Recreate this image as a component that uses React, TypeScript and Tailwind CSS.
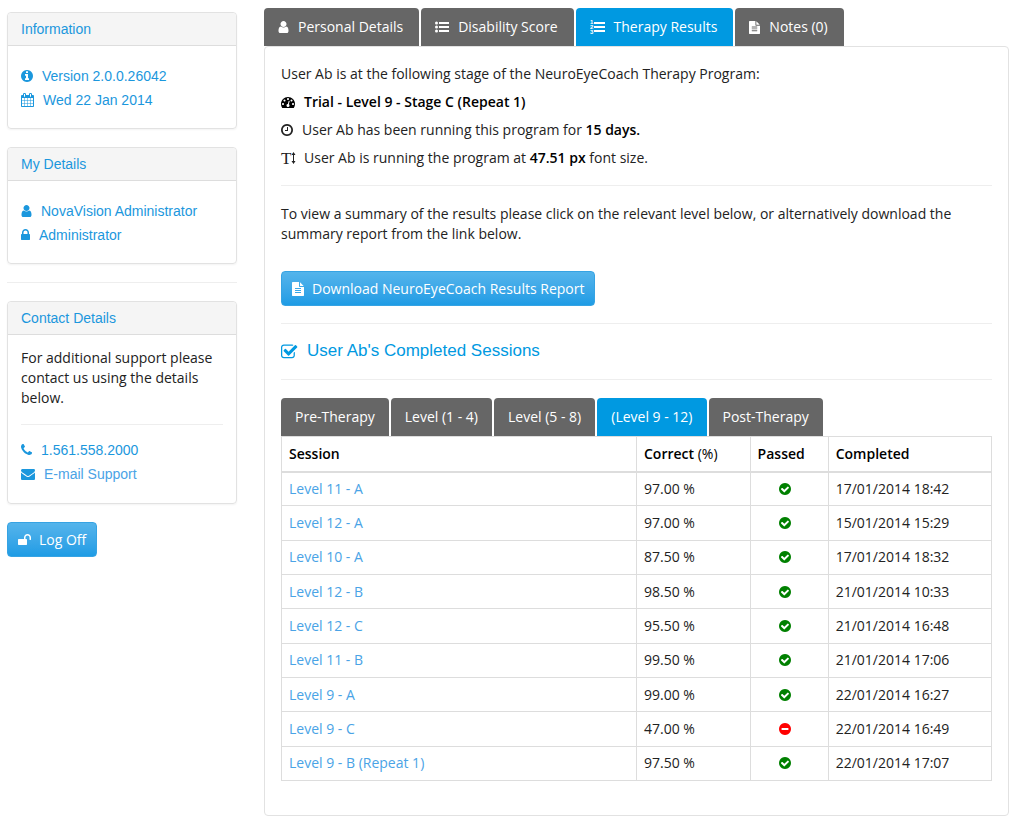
import { clsx } from "clsx";
import type { ReactNode } from "react";

const CIRCLE =
  "q0 209-103 385.5t-279.5 279.5-385.5 103-385.5-103-279.5-279.5-103-385.5 103-385.5 279.5-279.5 385.5-103 385.5 103 279.5 279.5 103 385.5z";
const DOT =
  "q0-53-37.5-90.5t-90.5-37.5-90.5 37.5-37.5 90.5 37.5 90.5 90.5 37.5 90.5-37.5 37.5-90.5z";
const LINE =
  "v-64q0-14-9-23t-23-9h-704q-14 0-23 9t-9 23v64q0 14 9 23t23 9h704q14 0 23-9t9-23z";

// every glyph sits on a 1792 unit high grid, x and w crop it to its own width
const icons = {
  user: {
    x: 192,
    w: 1408,
    d: "M1536 1399q0 109-62.5 187t-150.5 78h-854q-88 0-150.5-78t-62.5-187q0-85 8.5-160.5t31.5-152 58.5-131 94-89 134.5-34.5q131 128 313 128t313-128q76 0 134.5 34.5t94 89 58.5 131 31.5 152 8.5 160.5zm-256-887q0 159-112.5 271.5t-271.5 112.5-271.5-112.5-112.5-271.5 112.5-271.5 271.5-112.5 271.5 112.5 112.5 271.5z",
  },
  info: {
    x: 128,
    w: 1536,
    d: `M1152 1376v-160q0-14-9-23t-23-9h-96v-512q0-14-9-23t-23-9h-320q-14 0-23 9t-9 23v160q0 14 9 23t23 9h96v320h-96q-14 0-23 9t-9 23v160q0 14 9 23t23 9h448q14 0 23-9t9-23zm-128-896v-160q0-14-9-23t-23-9h-192q-14 0-23 9t-9 23v160q0 14 9 23t23 9h192q14 0 23-9t9-23zm640 416${CIRCLE}`,
  },
  calendar: {
    x: 64,
    w: 1664,
    d: "M192 1664h288v-288h-288v288zm352 0h320v-288h-320v288zm-352-352h288v-320h-288v320zm352 0h320v-320h-320v320zm-352-384h288v-288h-288v288zm736 736h320v-288h-320v288zm-384-736h320v-288h-320v288zm768 736h288v-288h-288v288zm-384-352h320v-320h-320v320zm-352-864v-288q0-13-9.5-22.5t-22.5-9.5h-64q-13 0-22.5 9.5t-9.5 22.5v288q0 13 9.5 22.5t22.5 9.5h64q13 0 22.5-9.5t9.5-22.5zm736 864h288v-320h-288v320zm-384-384h320v-288h-320v288zm384 0h288v-288h-288v288zm32-480v-288q0-13-9.5-22.5t-22.5-9.5h-64q-13 0-22.5 9.5t-9.5 22.5v288q0 13 9.5 22.5t22.5 9.5h64q13 0 22.5-9.5t9.5-22.5zm384-64v1280q0 52-38 90t-90 38h-1408q-52 0-90-38t-38-90v-1280q0-52 38-90t90-38h128v-96q0-66 47-113t113-47h64q66 0 113 47t47 113v96h384v-96q0-66 47-113t113-47h64q66 0 113 47t47 113v96h128q52 0 90 38t38 90z",
  },
  lock: {
    x: 320,
    w: 1152,
    d: "M640 768h512v-192q0-106-75-181t-181-75-181 75-75 181v192zm832 96v576q0 40-28 68t-68 28h-960q-40 0-68-28t-28-68v-576q0-40 28-68t68-28h32v-192q0-184 132-316t316-132 316 132 132 316v192h32q40 0 68 28t28 68z",
  },
  unlock: {
    x: 64,
    w: 1664,
    d: "M1728 576v256q0 26-19 45t-45 19h-64q-26 0-45-19t-19-45v-256q0-106-75-181t-181-75-181 75-75 181v192h96q40 0 68 28t28 68v576q0 40-28 68t-68 28h-960q-40 0-68-28t-28-68v-576q0-40 28-68t68-28h672v-192q0-185 131.5-316.5t316.5-131.5 316.5 131.5 131.5 316.5z",
  },
  phone: {
    x: 192,
    w: 1408,
    d: "M1600 1240q0 27-10 70.5t-21 68.5q-21 50-122 106-94 51-186 51-27 0-53-3.5t-57.5-12.5-47-14.5-55.5-20.5-49-18q-98-35-175-83-127-79-264-216t-216-264q-48-77-83-175-3-9-18-49t-20.5-55.5-14.5-47-12.5-57.5-3.5-53q0-92 51-186 56-101 106-122 25-11 68.5-21t70.5-10q14 0 21 3 18 6 53 76 11 19 30 54t35 63.5 31 53.5q3 4 17.5 25t21.5 35.5 7 28.5q0 20-28.5 50t-62 55-62 53-28.5 46q0 9 5 22.5t8.5 20.5 14 24 11.5 19q76 137 174 235t235 174q2 1 19 11.5t24 14 20.5 8.5 22.5 5q18 0 46-28.5t53-62 55-62 50-28.5q14 0 28.5 7t35.5 21.5 25 17.5q25 15 53.5 31t63.5 35 54 30q70 35 76 53 3 7 3 21z",
  },
  envelope: {
    x: 0,
    w: 1792,
    d: "M1792 710v794q0 66-47 113t-113 47h-1472q-66 0-113-47t-47-113v-794q44 49 101 87 362 246 497 345 57 42 92.5 65.5t94.5 48 110 24.5h2q51 0 110-24.5t94.5-48 92.5-65.5q170-123 498-345 57-39 100-87zm0-294q0 79-49 151t-122 123q-376 261-468 325-10 7-42.5 31t-54 38.5-52 32.5-57.5 27-50 9h-2q-23 0-50-9t-57.5-27-52-32.5-54-38.5-42.5-31q-91-64-262-182.5t-205-142.5q-62-42-117-115.5t-55-136.5q0-78 41.5-130t118.5-52h1472q65 0 112.5 47t47.5 113z",
  },
  list: {
    x: 0,
    w: 1792,
    d: "M384 1408a192 192 0 1 1-384 0 192 192 0 0 1 384 0zM384 896a192 192 0 1 1-384 0 192 192 0 0 1 384 0zM384 384a192 192 0 1 1-384 0 192 192 0 0 1 384 0zM512 1280h1280v256h-1280zM512 768h1280v256h-1280zM512 256h1280v256h-1280z",
  },
  file: {
    x: 128,
    w: 1536,
    d: `M1596 476q14 14 28 36h-472v-472q22 14 36 28zm-476 164h544v1056q0 40-28 68t-68 28h-1344q-40 0-68-28t-28-68v-1600q0-40 28-68t68-28h800v544q0 40 28 68t68 28zM1280 1376${LINE}M1280 1120${LINE}M1280 864${LINE}`,
  },
  dashboard: {
    x: 0,
    w: 1792,
    d: `M384 1152${DOT}M576 704${DOT}M1004 1185l101-382q6-26-7.5-48.5t-38.5-29.5-48 6.5-30 39.5l-101 382q-60 5-107 43.5t-63 98.5q-20 77 20 146t117 89 146-20 89-117q16-60-6-117t-72-91zM1664 1152${DOT}M1024 512${DOT}M1472 704${DOT}M1792 1152q0 261-141 483-19 29-54 29h-1402q-35 0-54-29-141-221-141-483 0-182 71-348t191-286 286-191 348-71 348 71 286 191 191 286 71 348z`,
  },
  clock: {
    x: 128,
    w: 1536,
    d: `M1024 544v448q0 14-9 23t-23 9h-320q-14 0-23-9t-9-23v-64q0-14 9-23t23-9h224v-352q0-14 9-23t23-9h64q14 0 23 9t9 23zm416 352q0-148-73-273t-198-198-273-73-273 73-198 198-73 273 73 273 198 198 273 73 273-73 198-198 73-273zm224 0${CIRCLE}`,
  },
  checkSquare: {
    x: 64,
    w: 1728,
    d: "M1472 930v318q0 119-84.5 203.5t-203.5 84.5h-832q-119 0-203.5-84.5t-84.5-203.5v-832q0-119 84.5-203.5t203.5-84.5h832q63 0 117 25 15 7 18 23 3 17-9 29l-49 49q-10 10-23 10-3 0-9-2-23-6-45-6h-832q-66 0-113 47t-47 113v832q0 66 47 113t113 47h832q66 0 113-47t47-113v-254q0-13 9-22l64-64q10-10 23-10 6 0 12 3 20 8 20 29zm231-489l-814 814q-24 24-57 24t-57-24l-430-430q-24-24-24-57t24-57l110-110q24-24 57-24t57 24l263 263 647-647q24-24 57-24t57 24l110 110q24 24 24 57t-24 57z",
  },
  check: {
    x: 128,
    w: 1536,
    d: `M1412 734q0-28-18-46l-91-90q-19-19-45-19t-45 19l-408 407-226-226q-19-19-45-19t-45 19l-91 90q-18 18-18 46 0 27 18 45l362 362q19 19 45 19 27 0 46-19l543-543q18-18 18-45zm252 162${CIRCLE}`,
  },
  minus: {
    x: 128,
    w: 1536,
    d: `M1344 960v-128q0-26-19-45t-45-19h-768q-26 0-45 19t-19 45v128q0 26 19 45t45 19h768q26 0 45-19t19-45zm320-64${CIRCLE}`,
  },
};

type IconProps = {
  name: keyof typeof icons;
  size?: number;
};

const Icon = ({ name, size = 14 }: IconProps) => {
  const { x, w, d } = icons[name];

  return (
    <svg
      aria-hidden="true"
      className="shrink-0"
      width={Math.round((w * size) / 1792)}
      height={size}
      viewBox={`${x} 0 ${w} 1792`}
      fill="currentColor"
      fillRule="evenodd"
    >
      <path d={d} />
    </svg>
  );
};

const NumberedListIcon = () => (
  <svg aria-hidden="true" className="shrink-0" width="15" height="14" viewBox="0 0 15 14" fill="currentColor">
    <g className="font-['Liberation_Sans',sans-serif] text-[6px] font-bold">
      <text x="0" y="4">1</text>
      <text x="0" y="9">2</text>
      <text x="0" y="14">3</text>
    </g>
    <path d="M4 2h11v2H4zM4 6h11v2H4zM4 10h11v2H4z" />
  </svg>
);

const TextHeightIcon = () => (
  <svg
    aria-hidden="true"
    className="shrink-0 overflow-visible"
    width="14"
    height="14"
    viewBox="0 0 14 14"
    fill="currentColor"
  >
    <text x="0" y="13" className="font-['Liberation_Serif',serif] text-[17px]">
      T
    </text>
    <path d="M12.500 1l2 3h-1.500v6h1.500l-2 3-2-3h1.500v-6h-1.500z" />
  </svg>
);

const mainTabs = [
  { label: "Personal Details", icon: <Icon name="user" /> },
  { label: "Disability Score", icon: <Icon name="list" /> },
  { label: "Therapy Results", icon: <NumberedListIcon />, active: true },
  { label: "Notes (0)", icon: <Icon name="file" size={13} /> },
];

const levelTabs = [
  { label: "Pre-Therapy" },
  { label: "Level (1 - 4)" },
  { label: "Level (5 - 8)" },
  { label: "(Level 9 - 12)", active: true },
  { label: "Post-Therapy" },
];

const sessions = [
  { name: "Level 11 - A", correct: "97.00 %", passed: true, completed: "17/01/2014 18:42" },
  { name: "Level 12 - A", correct: "97.00 %", passed: true, completed: "15/01/2014 15:29" },
  { name: "Level 10 - A", correct: "87.50 %", passed: true, completed: "17/01/2014 18:32" },
  { name: "Level 12 - B", correct: "98.50 %", passed: true, completed: "21/01/2014 10:33" },
  { name: "Level 12 - C", correct: "95.50 %", passed: true, completed: "21/01/2014 16:48" },
  { name: "Level 11 - B", correct: "99.50 %", passed: true, completed: "21/01/2014 17:06" },
  { name: "Level 9 - A", correct: "99.00 %", passed: true, completed: "22/01/2014 16:27" },
  { name: "Level 9 - C", correct: "47.00 %", passed: false, completed: "22/01/2014 16:49" },
  { name: "Level 9 - B (Repeat 1)", correct: "97.50 %", passed: true, completed: "22/01/2014 17:07" },
];

type TabsProps = {
  label: string;
  tabs: { label: string; icon?: ReactNode; active?: boolean }[];
};

const Tabs = ({ label, tabs }: TabsProps) => (
  <div role="tablist" aria-label={label} className="flex gap-0.5">
    {tabs.map(({ label, icon, active }) => (
      <button
        key={label}
        type="button"
        role="tab"
        aria-selected={!!active}
        className={clsx(
          "flex h-[38px] items-center gap-[9px] rounded-t pl-3.5 whitespace-nowrap text-white",
          icon ? "pr-4" : "pr-3.5",
          active ? "bg-[#0099e1]" : "bg-[#666666]",
        )}
      >
        {icon}
        {label}
      </button>
    ))}
  </div>
);

const Panel = ({ title, children }: { title: string; children: ReactNode }) => (
  <section className="rounded border border-[#e2e2e2] shadow-xs">
    <h2 className="rounded-t border-b border-[#dddddd] bg-[#f5f5f5] px-[13px] font-['Liberation_Sans',sans-serif] leading-8 text-[#1b97dd]">
      {title}
    </h2>
    <div className="px-[13px]">{children}</div>
  </section>
);

const Row = ({ icon, children }: { icon: IconProps["name"]; children: ReactNode }) => (
  <li className="flex h-6 items-center gap-[9px] whitespace-nowrap text-[#1b97dd]">
    <Icon name={icon} />
    {children}
  </li>
);

const BlueButton = ({ icon, children }: { icon: IconProps["name"]; children: ReactNode }) => (
  <button
    type="button"
    className="flex h-[35px] items-center gap-2 rounded border border-[#36a3e3] bg-linear-to-b from-[#54b4eb] to-[#1d9ce5] px-2.5 whitespace-nowrap text-white"
  >
    <Icon name={icon} />
    {children}
  </button>
);

const Divider = () => <hr className="border-[#eeeeee]" />;

const App = () => {
  return (
    <div className="flex items-start gap-[27px] bg-white pt-2 pr-[15px] pb-3 pl-[7px] font-['Open_Sans',sans-serif] text-sm text-[#222222]">
      <aside className="mt-1 flex w-[230px] shrink-0 flex-col gap-[18px]">
        <Panel title="Information">
          <ul className="pt-[18px] pb-4 font-['Liberation_Sans',sans-serif]">
            <Row icon="info">Version 2.0.0.26042</Row>
            <Row icon="calendar">Wed 22 Jan 2014</Row>
          </ul>
        </Panel>

        <Panel title="My Details">
          <ul className="pt-[18px] pb-4 font-['Liberation_Sans',sans-serif]">
            <Row icon="user">NovaVision Administrator</Row>
            <Row icon="lock">Administrator</Row>
          </ul>
        </Panel>

        <Divider />

        <Panel title="Contact Details">
          <p className="pt-[13px] pb-4 leading-5">
            For additional support please contact us using the details below.
          </p>
          <Divider />
          <ul className="pt-[13px] pb-[17px] font-['Liberation_Sans',sans-serif]">
            <Row icon="phone">1.561.558.2000</Row>
            <Row icon="envelope">
              <a href="#support" className="text-[#4aa3e6]">
                E-mail Support
              </a>
            </Row>
          </ul>
        </Panel>

        <div className="flex">
          <BlueButton icon="unlock">Log Off</BlueButton>
        </div>
      </aside>

      <main className="min-w-0 flex-1">
        <Tabs label="Patient" tabs={mainTabs} />
        <div className="rounded border border-[#e2e2e2] px-4 pt-[17px] pb-[34px]">
          <div className="flex flex-col gap-2 pb-[17px] leading-5">
            <p>User Ab is at the following stage of the NeuroEyeCoach Therapy Program:</p>
            <p className="flex items-center gap-[9px] font-semibold text-black">
              <Icon name="dashboard" />
              Trial - Level 9 - Stage C (Repeat 1)
            </p>
            <p className="flex items-center gap-[9px]">
              <Icon name="clock" />
              <span>
                User Ab has been running this program for{" "}
                <strong className="font-semibold text-black">15 days.</strong>
              </span>
            </p>
            <p className="flex items-center gap-[9px]">
              <TextHeightIcon />
              <span>
                User Ab is running the program at{" "}
                <strong className="font-semibold text-black">47.51 px</strong> font size.
              </span>
            </p>
          </div>
          <Divider />

          <p className="pt-[18px] pb-[27px] leading-5">
            To view a summary of the results please click on the relevant level below, or
            alternatively download the summary report from the link below.
          </p>
          <div className="flex pb-[17px]">
            <BlueButton icon="file">Download NeuroEyeCoach Results Report</BlueButton>
          </div>
          <Divider />

          <h2 className="flex h-[55px] items-center gap-[9px] font-['Liberation_Sans',sans-serif] text-[17px] text-[#0099e1]">
            <Icon name="checkSquare" size={18} />
            User Ab's Completed Sessions
          </h2>
          <Divider />

          <div className="pt-[18px]">
            <Tabs label="Level" tabs={levelTabs} />
            <table className="h-[345px] w-full table-fixed border-collapse border border-[#dddddd] text-left">
              <thead>
                <tr className="h-[35px] border-b-2 border-[#dddddd] text-black">
                  <th className="w-1/2 border-r border-[#dddddd] px-[7px] font-semibold">Session</th>
                  <th className="w-[16%] border-r border-[#dddddd] px-[7px] font-semibold">
                    Correct <span className="font-normal">(%)</span>
                  </th>
                  <th className="w-[11%] border-r border-[#dddddd] px-[7px] font-semibold">Passed</th>
                  <th className="px-[7px] font-semibold">Completed</th>
                </tr>
              </thead>
              <tbody>
                {sessions.map(({ name, correct, passed, completed }) => (
                  <tr key={name} className="h-[34px] border-b border-[#dddddd]">
                    <td className="border-r border-[#dddddd] px-[7px]">
                      <a href="#session" className="text-[#4aa3e6]">
                        {name}
                      </a>
                    </td>
                    <td className="border-r border-[#dddddd] px-[7px]">{correct}</td>
                    <td className="border-r border-[#dddddd] pr-[15px] pl-[7px]">
                      <span
                        role="img"
                        aria-label={passed ? "Passed" : "Not passed"}
                        className={clsx(
                          "flex justify-center",
                          passed ? "text-[#008000]" : "text-[#ff0000]",
                        )}
                      >
                        <Icon name={passed ? "check" : "minus"} />
                      </span>
                    </td>
                    <td className="px-[7px]">{completed}</td>
                  </tr>
                ))}
              </tbody>
            </table>
          </div>
        </div>
      </main>
    </div>
  );
};

export default App;
